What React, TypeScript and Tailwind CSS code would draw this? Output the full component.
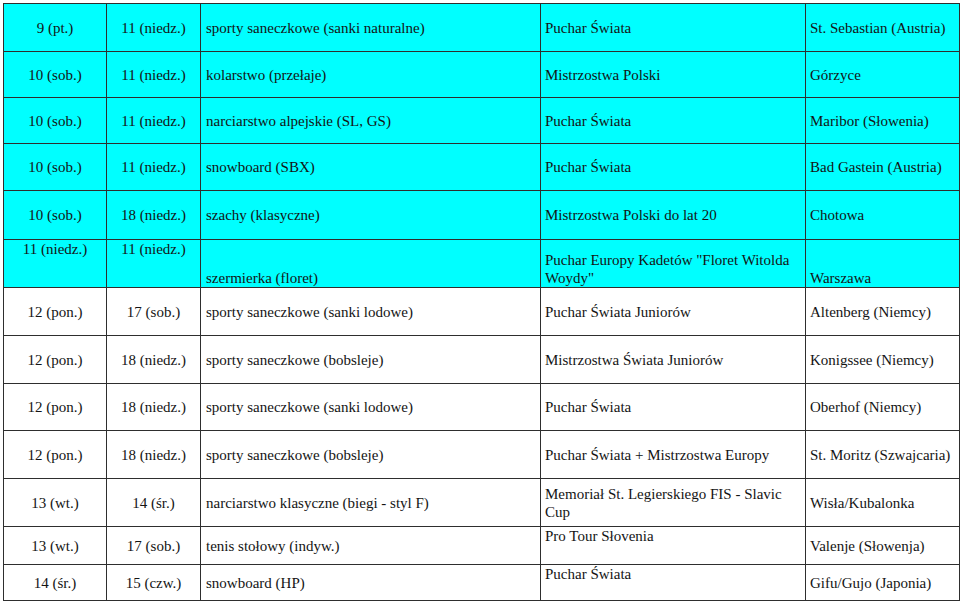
type Row = {
  from: string;
  to: string;
  sport: string;
  event: string;
  place: string;
  h: string;
  cyan?: boolean;
  kind?: "fence" | "topEvent";
};

const rows: Row[] = [
  { from: "9 (pt.)", to: "11 (niedz.)", sport: "sporty saneczkowe (sanki naturalne)", event: "Puchar Świata", place: "St. Sebastian (Austria)", h: "h-[48px]", cyan: true },
  { from: "10 (sob.)", to: "11 (niedz.)", sport: "kolarstwo (przełaje)", event: "Mistrzostwa Polski", place: "Górzyce", h: "h-[46px]", cyan: true },
  { from: "10 (sob.)", to: "11 (niedz.)", sport: "narciarstwo alpejskie (SL, GS)", event: "Puchar Świata", place: "Maribor (Słowenia)", h: "h-[46px]", cyan: true },
  { from: "10 (sob.)", to: "11 (niedz.)", sport: "snowboard (SBX)", event: "Puchar Świata", place: "Bad Gastein (Austria)", h: "h-[47px]", cyan: true },
  { from: "10 (sob.)", to: "18 (niedz.)", sport: "szachy (klasyczne)", event: "Mistrzostwa Polski do lat 20", place: "Chotowa", h: "h-[49px]", cyan: true },
  { from: "11 (niedz.)", to: "11 (niedz.)", sport: "szermierka (floret)", event: "Puchar Europy Kadetów \"Floret Witolda Woydy\"", place: "Warszawa", h: "h-[48px]", cyan: true, kind: "fence" },
  { from: "12 (pon.)", to: "17 (sob.)", sport: "sporty saneczkowe (sanki lodowe)", event: "Puchar Świata Juniorów", place: "Altenberg (Niemcy)", h: "h-[48px]" },
  { from: "12 (pon.)", to: "18 (niedz.)", sport: "sporty saneczkowe (bobsleje)", event: "Mistrzostwa Świata Juniorów", place: "Konigssee (Niemcy)", h: "h-[48px]" },
  { from: "12 (pon.)", to: "18 (niedz.)", sport: "sporty saneczkowe (sanki lodowe)", event: "Puchar Świata", place: "Oberhof (Niemcy)", h: "h-[47px]" },
  { from: "12 (pon.)", to: "18 (niedz.)", sport: "sporty saneczkowe (bobsleje)", event: "Puchar Świata + Mistrzostwa Europy", place: "St. Moritz (Szwajcaria)", h: "h-[48px]" },
  { from: "13 (wt.)", to: "14 (śr.)", sport: "narciarstwo klasyczne (biegi - styl F)", event: "Memoriał St. Legierskiego FIS - Slavic Cup", place: "Wisła/Kubalonka", h: "h-[48px]" },
  { from: "13 (wt.)", to: "17 (sob.)", sport: "tenis stołowy (indyw.)", event: "Pro Tour Słovenia", place: "Valenje (Słowenja)", h: "h-[38px]", kind: "topEvent" },
  { from: "14 (śr.)", to: "15 (czw.)", sport: "snowboard (HP)", event: "Puchar Świata", place: "Gifu/Gujo (Japonia)", h: "h-[36px]", kind: "topEvent" },
];

export default function App() {
  return (
    <div className="min-h-[602px] bg-white pl-[3px] pt-[3px] font-[family-name:Liberation_Serif,Times_New_Roman,serif] text-[15px] leading-[18px] text-[#141414]">
      <table className="w-[956px] table-fixed border-collapse border border-[#5a5a5a]">
        <colgroup>
          <col className="w-[103px]" />
          <col className="w-[94px]" />
          <col className="w-[340px]" />
          <col className="w-[265px]" />
          <col className="w-[154px]" />
        </colgroup>
        <tbody>
          {rows.map((r, i) => {
            const fence = r.kind === "fence";
            const topEvent = r.kind === "topEvent";
            return (
              <tr key={i} className={`${r.h} ${r.cyan ? "bg-[#00ffff]" : "bg-white"}`}>
                <td className={`border border-[#2e2e2e] p-0 text-center ${fence ? "align-top" : "align-middle"}`}>
                  {r.from}
                </td>
                <td className={`border border-[#2e2e2e] p-0 text-center ${fence ? "align-top" : "align-middle"}`}>
                  {r.to}
                </td>
                <td className={`border border-[#2e2e2e] px-[5px] py-0 ${fence ? "align-bottom" : "align-middle"}`}>
                  {r.sport}
                </td>
                <td
                  className={`border border-[#2e2e2e] px-[4px] py-0 ${
                    fence ? "align-bottom" : topEvent ? "align-top" : "align-middle"
                  }`}
                >
                  {r.event}
                </td>
                <td className={`border border-[#2e2e2e] px-[4px] py-0 ${fence ? "align-bottom" : "align-middle"}`}>
                  {r.place}
                </td>
              </tr>
            );
          })}
        </tbody>
      </table>
    </div>
  );
}
